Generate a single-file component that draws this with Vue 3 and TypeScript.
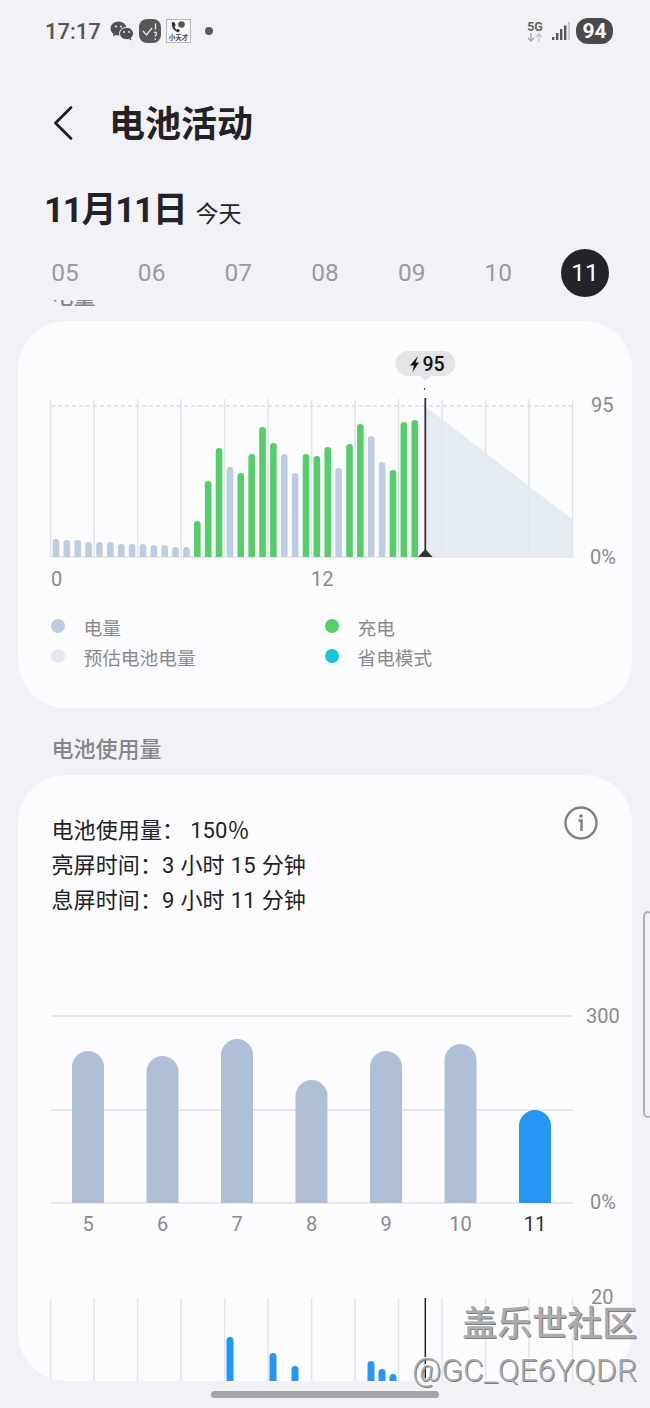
<script setup lang="ts">
const days = ['05', '06', '07', '08', '09', '10', '11']
const gridX = Array.from({ length: 13 }, (_, i) => 50.6 + i * 43.5)

const BLUE = '#bccde2'
const GREEN = '#54cf68'
const hourly: [number, string][] = [
  [539, BLUE], [540, BLUE], [540, BLUE], [542, BLUE], [542, BLUE], [542, BLUE], [544, BLUE],
  [544, BLUE], [544, BLUE], [545, BLUE], [545, BLUE], [547, BLUE], [547, BLUE],
  [521, GREEN], [481, GREEN], [448, GREEN], [467, BLUE], [473, GREEN], [454, GREEN], [427, GREEN],
  [443, GREEN], [454, BLUE], [473, BLUE], [454, GREEN], [456, GREEN], [447, GREEN], [468, BLUE],
  [444, GREEN], [424, GREEN], [436, BLUE], [462, BLUE], [470, GREEN], [422, GREEN], [420, GREEN]
]

function bar(x: number, w: number, top: number, base: number): string {
  const r = w / 2
  return `M${x} ${base}V${top + r}A${r} ${r} 0 0 1 ${x + w} ${top + r}V${base}Z`
}

const levelBars = hourly.map(([top, color], i) => ({ d: bar(52.7 + i * 10.87, 6.6, top, 557), color }))

const daily = [
  { label: '5', x: 72, top: 1051 },
  { label: '6', x: 146.5, top: 1056 },
  { label: '7', x: 221, top: 1039 },
  { label: '8', x: 295.5, top: 1080 },
  { label: '9', x: 370, top: 1051 },
  { label: '10', x: 444.5, top: 1044 },
  { label: '11', x: 519, top: 1110 }
].map((b, i) => ({ ...b, d: bar(b.x, 32, b.top, 1203), today: i === 6 }))

const usageBars = [
  [226.5, 1337], [269.5, 1353], [291.5, 1366], [367.5, 1361], [378.5, 1369], [389.5, 1374]
].map(([x, top]) => bar(x, 7, top, 1381))

const legend = [
  { label: '电量', color: '#bccde2' },
  { label: '充电', color: '#54cf68' },
  { label: '预估电池电量', color: '#e2e9f2' },
  { label: '省电模式', color: '#17c6dd' }
]
const stats = ['电池使用量： 150％', '亮屏时间：3 小时 15 分钟', '息屏时间：9 小时 11 分钟']
</script>

<template>
  <div class="page">
    <div class="status">
      <span class="time">17:17</span>
      <svg class="ic-wechat" width="24" height="20" viewBox="0 0 24 20">
        <ellipse cx="8.5" cy="7.5" rx="8" ry="7" fill="#505052" />
        <path d="M3.5 12l-.5 3.5 3.5-2z" fill="#505052" />
        <ellipse cx="16.5" cy="12.5" rx="7" ry="6.2" fill="#505052" stroke="#f2f2f6" stroke-width="1" />
        <path d="M20.5 17l1.5 2.5-3.5-1.500z" fill="#505052" />
        <circle cx="6" cy="5.5" r="1" fill="#f2f2f6" /><circle cx="11" cy="5.5" r="1" fill="#f2f2f6" />
        <circle cx="14" cy="11" r=".9" fill="#f2f2f6" /><circle cx="19" cy="11" r=".9" fill="#f2f2f6" />
      </svg>
      <svg class="ic-task" width="22" height="24" viewBox="0 0 22 24">
        <rect width="22" height="24" rx="8" fill="#59595b" />
        <path d="M4 12l3.5 4L13 9" fill="none" stroke="#e8e8ea" stroke-width="1.3" />
        <path d="M16.5 4.5v6M15 14c1-1.500 3-.5 2.5 1-.3.8-1.200 1-1.200 2.500M16.300 19.500v1.500" fill="none" stroke="#e8e8ea" stroke-width="1.3" />
      </svg>
      <svg class="ic-phone" width="25" height="24" viewBox="0 0 25 24">
        <rect x=".5" y=".5" width="24" height="23" fill="#f7f7f9" stroke="#b9b9bc" />
        <path d="M6 3c-1 4.500 1.500 9 6.500 10.500l1.500-2.200-2.500-1.500-1 1c-1-.7-1.800-2.200-2-3.500l1.200-.8-1-3z" fill="#333" />
        <circle cx="15.5" cy="5.5" r="3.3" fill="#555" />
        <text x="12.5" y="21" class="tiny">小天才</text>
      </svg>
      <i class="dot"></i>
      <span class="spacer"></span>
      <div class="net">
        <span class="net-5g">5G</span>
        <svg width="16" height="9" viewBox="0 0 16 9">
          <path d="M4 0v8M1 5l3 3 3-3" fill="none" stroke="#a6a6a9" stroke-width="1.3" />
          <path d="M12 9V1M9 4l3-3 3 3" fill="none" stroke="#c4c4c7" stroke-width="1.3" />
        </svg>
      </div>
      <svg class="signal" width="18" height="18" viewBox="0 0 18 18">
        <rect x="0" y="15" width="2.4" height="3" fill="#555" />
        <rect x="4" y="11" width="2.4" height="7" fill="#555" />
        <rect x="8" y="7" width="2.4" height="11" fill="#555" />
        <rect x="12" y="3.5" width="2.4" height="14.5" fill="#555" />
        <rect x="15.8" y="0" width="2.2" height="18" fill="#c6c6c9" />
      </svg>
      <span class="battery">94</span>
    </div>

    <header class="head">
      <svg width="22" height="36" viewBox="0 0 22 36" class="back">
        <path d="M19 2.5L3.5 18 19 33.5" fill="none" stroke="#1f1f23" stroke-width="2.8" stroke-linecap="round" stroke-linejoin="round" />
      </svg>
      <h1>电池活动</h1>
    </header>

    <div class="date"><strong>11月11日</strong><span>今天</span></div>

    <div class="days">
      <span v-for="d in days" :key="d" class="day" :class="{ on: d === '11' }"><b>{{ d }}</b></span>
    </div>

    <main class="scroller">
      <div class="sec first">电量</div>
      <section class="card one">
        <svg class="chart c1" width="614" height="250" viewBox="18 345 614 250">
          <line v-for="x in gridX" :key="x" :x1="x" :x2="x" y1="399" y2="557" class="grid" />
          <polygon points="426,407 573,520 573,557 426,557" fill="#dfe7f0" fill-opacity=".85" />
          <line x1="51" x2="573" y1="406" y2="406" class="dash" />
          <line x1="51" x2="573" y1="557" y2="557" class="grid" />
          <path v-for="(b, i) in levelBars" :key="i" :d="b.d" :fill="b.color" />
          <line x1="425.3" x2="425.3" y1="398" y2="552" stroke="#333336" stroke-width="1.8" />
          <line x1="424.5" x2="424.5" y1="388" y2="390" stroke="#555" stroke-width="1.2" />
          <polygon points="418,557 425.3,549 432.6,557" fill="#333336" />
          <path d="M408 351h35a12.5 12.5 0 0 1 0 25h-13l-4.5 5-4.5-5h-13a12.5 12.5 0 0 1 0-25z" fill="#e4e4e7" />
          <path d="M418 356l-8 9.5h4l-1.500 6.500 6.500-9.500h-3.500z" fill="#111" />
          <text x="422.5" y="370.5" class="tip">95</text>
          <text x="51" y="586" class="ax">0</text>
          <text x="311" y="586" class="ax">12</text>
          <text x="591" y="412" class="ax">95</text>
          <text x="590" y="564" class="ax">0%</text>
        </svg>
        <div class="legend">
          <div v-for="l in legend" :key="l.label" class="li">
            <i :style="{ background: l.color }"></i><span>{{ l.label }}</span>
          </div>
        </div>
      </section>

      <div class="sec second">电池使用量</div>
      <section class="card two">
        <div class="info-row">
          <div class="stats"><p v-for="s in stats" :key="s">{{ s }}</p></div>
          <svg width="34" height="34" viewBox="0 0 34 34">
            <circle cx="17" cy="17" r="15.5" fill="none" stroke="#808084" stroke-width="2.4" />
            <circle cx="17" cy="10" r="1.8" fill="#808084" />
            <path d="M14.5 14.5H17.500V25" fill="none" stroke="#808084" stroke-width="2.4" />
          </svg>
        </div>
        <svg class="chart c2" width="614" height="250" viewBox="18 990 614 250">
          <line v-for="y in [1016, 1110, 1203]" :key="y" x1="51" x2="573" :y1="y" :y2="y" class="hline" />
          <g v-for="b in daily" :key="b.label">
            <path :d="b.d" :fill="b.today ? '#2496f4' : '#b0bfd8'" />
            <text :x="b.x + 16" y="1231" class="ax mid" :class="{ now: b.today }">{{ b.label }}</text>
          </g>
          <text x="586" y="1023" class="ax">300</text>
          <text x="590" y="1209" class="ax">0%</text>
        </svg>
        <svg class="chart c3" width="614" height="101" viewBox="18 1280 614 101">
          <line v-for="x in gridX" :key="x" :x1="x" :x2="x" y1="1298" y2="1381" class="grid" />
          <path v-for="d in usageBars" :key="d" :d="d" fill="#2496f4" />
          <line x1="425.3" x2="425.3" y1="1298" y2="1381" stroke="#222" stroke-width="1.5" />
          <text x="591" y="1304" class="ax">20</text>
        </svg>
      </section>
    </main>

    <div class="wm wm-a">盖乐世社区</div>
    <div class="wm wm-b">@GC_QE6YQDR</div>
    <i class="thumb"></i>
    <i class="handle"></i>
  </div>
</template>

<style scoped>
.page {
  position: relative;
  width: 650px;
  height: 1408px;
  overflow: hidden;
  background: #f2f2f6;
  font-family: Roboto, "Noto Sans CJK SC", sans-serif;
  color: #222226;
}
.status {
  display: flex;
  align-items: center;
  height: 62px;
  padding: 0 37px 0 45px;
}
.time { font-size: 22px; font-weight: 500; color: #555558; width: 65px; }
.ic-task { margin-left: 5px; }
.ic-phone { margin-left: 5px; }
.tiny { font-size: 6.5px; font-weight: 700; fill: #444; text-anchor: middle; }
.dot { width: 8px; height: 8px; margin-left: 14px; border-radius: 50%; background: #5c5c5e; }
.spacer { flex: 1; }
.net { display: flex; flex-direction: column; align-items: center; width: 16px; margin-right: 9px; }
.net-5g { font-size: 12.5px; line-height: 12px; font-weight: 700; color: #666669; }
.signal { margin-right: 6px; }
.battery {
  width: 37px;
  height: 26px;
  border-radius: 12px;
  background: #4a4a4c;
  color: #fff;
  font-size: 21px;
  font-weight: 700;
  line-height: 26px;
  text-align: center;
}
.head {
  display: flex;
  align-items: center;
  height: 122px;
  padding-left: 52px;
}
.back { margin-right: 35px; }
h1 { margin: 3px 0 0; font-size: 36px; font-weight: 700; line-height: 44px; color: #222226; }
.date {
  display: flex;
  align-items: baseline;
  gap: 9px;
  height: 50px;
  padding-left: 44px;
  line-height: 54px;
}
.date strong { font-size: 35px; font-weight: 700; letter-spacing: -1.3px; }
.date span { font-size: 23px; }
.days {
  display: grid;
  grid-template-columns: repeat(7, 1fr);
  height: 48px;
  margin-top: 15px;
  padding: 0 21.67px;
}
.day { display: flex; align-items: center; justify-content: center; font-size: 24.5px; color: #9a9a9e; }
.day b {
  display: block;
  width: 48px;
  height: 48px;
  border-radius: 50%;
  font-weight: 400;
  line-height: 48px;
  text-align: center;
}
.day.on b { background: #23232a; color: #fff; }
.scroller {
  height: 1081px;
  margin-top: 3px;
  overflow: hidden;
}
.sec {
  height: 30px;
  padding-left: 51.5px;
  font-size: 22px;
  font-weight: 500;
  line-height: 30px;
  color: #86868a;
}
.first { margin-top: -18px; }
.card {
  margin: 0 18px;
  border-radius: 48px;
  background: #fcfcfe;
  overflow: hidden;
}
.one { height: 387px; margin-top: 9px; padding-top: 24px; box-sizing: border-box; }
.second { margin-top: 27px; }
.two { height: 606px; margin-top: 10px; }
.chart { display: block; }
.grid { stroke: #e4e4e9; stroke-width: 1.5; }
.hline { stroke: #e2e2e6; stroke-width: 1.5; }
.dash { stroke: #dcdce0; stroke-width: 1.5; stroke-dasharray: 4 3; }
.ax { font-size: 20px; fill: #8a8a8e; }
.mid { text-anchor: middle; }
.now { fill: #333336; }
.tip { font-size: 19.5px; font-weight: 500; fill: #111; }
.legend {
  display: grid;
  grid-template-columns: 274px 1fr;
  grid-auto-rows: 30px;
  margin-top: 16px;
  padding-left: 33px;
}
.li { display: flex; align-items: center; gap: 18.5px; font-size: 18.7px; color: #8a8a8e; }
.li i { width: 14px; height: 14px; border-radius: 50%; }
.info-row {
  display: flex;
  justify-content: space-between;
  align-items: flex-start;
  height: 143.5px;
  padding: 31px 34px 0 33.5px;
  box-sizing: border-box;
}
.stats { margin-top: 7px; font-size: 22px; line-height: 35px; letter-spacing: .1px; word-spacing: .5px; color: #222226; }
.stats p { margin: 0; }
.c2 { margin-top: 71.5px; }
.c3 { margin-top: 40px; }
.wm { position: absolute; right: 13px; color: #ababad; text-shadow: 1px 1px 0 #7c7c7e, -1px -1px 0 #fff; white-space: nowrap; }
.wm-a { top: 1302px; font-size: 35px; font-weight: 500; line-height: 46px; }
.wm-b { top: 1350px; font-size: 32px; font-weight: 300; line-height: 40px; }
.thumb {
  position: absolute;
  left: 211px;
  top: 1391px;
  width: 228px;
  height: 7px;
  border-radius: 4px;
  background: #a5a5a9;
}
.handle {
  position: absolute;
  left: 643px;
  top: 911px;
  width: 10px;
  height: 207px;
  border: 2px solid #b0b0b3;
  border-radius: 6px;
  box-sizing: border-box;
}
</style>
